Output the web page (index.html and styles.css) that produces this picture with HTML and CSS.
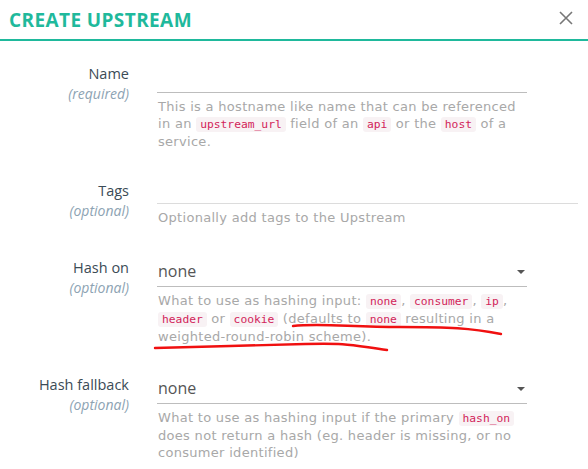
FILE: index.html
```html
<!DOCTYPE html>
<html>
<head>
<meta charset="utf-8">
<link rel="stylesheet" href="styles.css">
</head>
<body>
<header class="hdr">
  <h1 class="title">CREATE UPSTREAM</h1>
  <span class="close" aria-label="close">
    <svg width="14" height="14" viewBox="0 0 14 14"><path d="M1 1 L13 13 M13 1 L1 13" stroke="#777" stroke-width="1.6" fill="none"/></svg>
  </span>
</header>
<main class="form">
  <div class="row row-name">
    <div class="lbl"><div class="lname">Name</div><div class="lsub">(required)</div></div>
    <div class="field">
      <div class="input"></div>
      <p class="help">This is a hostname like name that can be referenced in an <code>upstream_url</code> field of an <code>api</code> or the <code>host</code> of a service.</p>
    </div>
  </div>
  <div class="row row-tags">
    <div class="lbl"><div class="lname">Tags</div><div class="lsub">(optional)</div></div>
    <div class="field">
      <div class="input input-tags"></div>
      <p class="help">Optionally add tags to the Upstream</p>
    </div>
  </div>
  <div class="row row-hash">
    <div class="lbl"><div class="lname">Hash on</div><div class="lsub">(optional)</div></div>
    <div class="field">
      <div class="input select"><span class="val">none</span><span class="caret"></span></div>
      <p class="help">What to use as hashing input: <code>none</code>, <code>consumer</code>, <code>ip</code>, <code>header</code> or <code>cookie</code> (defaults to <code>none</code> resulting in a weighted-round-robin scheme).</p>
    </div>
  </div>
  <div class="row row-fallback">
    <div class="lbl"><div class="lname">Hash fallback</div><div class="lsub">(optional)</div></div>
    <div class="field">
      <div class="input select"><span class="val">none</span><span class="caret"></span></div>
      <p class="help">What to use as hashing input if the primary <code>hash_on</code> does not return a hash (eg. header is missing, or no consumer identified)</p>
    </div>
  </div>
</main>
<svg class="scribble" width="588" height="469" viewBox="0 0 588 469">
  <path d="M293 326 C 320 323, 350 327, 400 327 S 470 328, 501 334" stroke="#f01010" stroke-width="2.4" fill="none" stroke-linecap="round"/>
  <path d="M155 348 C 200 347, 260 345, 305 344 S 350 345, 387 350" stroke="#f01010" stroke-width="2.4" fill="none" stroke-linecap="round"/>
</svg>
</body>
</html>
```
FILE: styles.css
```css
html, body {
  margin: 0;
  padding: 0;
  background: #fff;
}
body {
  width: 588px;
  height: 469px;
  overflow: hidden;
  position: relative;
  font-family: "Open Sans", "Liberation Sans", sans-serif;
}
.hdr {
  height: 39px;
  border-bottom: 2px solid #1fb99c;
  display: flex;
  align-items: center;
  justify-content: space-between;
  padding: 0 15px 0 9px;
}
.title {
  margin: 0;
  font-size: 19px;
  font-weight: 700;
  color: #1fb99c;
  letter-spacing: 0.4px;
}
.close {
  display: flex;
  margin-top: -4px;
}
.form {
  padding: 0 0 0 8px;
}
.row {
  display: grid;
  grid-template-columns: 121px 370px;
  column-gap: 28px;
}
.row-name { margin-top: 22px; }
.row-tags { margin-top: 24px; }
.row-tags .field { width: 421px; }
.row-tags .lbl { padding-top: 7px; }
.row-hash { margin-top: 31px; }
.row-fallback { margin-top: 29px; }
.lbl {
  text-align: right;
  padding-top: 1px;
}
.lname {
  font-size: 14.5px;
  line-height: 19px;
  color: #3b4b56;
}
.lsub {
  font-size: 14px;
  line-height: 22px;
  font-style: italic;
  color: #8da3b3;
}
.input {
  height: 29px;
  border-bottom: 1px solid #bdbdbd;
}
.input-tags {
  border-bottom-color: #dcdcdc;
}
.select {
  display: flex;
  align-items: center;
  justify-content: space-between;
  padding-right: 2px;
}
.val {
  font-size: 16px;
  color: #555;
  padding-left: 1px;
  margin-top: -2px;
}
.caret {
  width: 0;
  height: 0;
  border-left: 4px solid transparent;
  border-right: 4px solid transparent;
  border-top: 4px solid #555;
}
.help {
  margin: 5px 0 0 1px;
  font-family: "DejaVu Sans", sans-serif;
  font-size: 13px;
  line-height: 17px;
  color: #a8a8a8;
  letter-spacing: 0.3px;
}
code {
  font-family: "DejaVu Sans Mono", monospace;
  font-size: 11.3px;
  color: #d2245a;
  background: #f8f2f4;
  border-radius: 3px;
  padding: 1px 4px;
  letter-spacing: 0;
}
.scribble {
  position: absolute;
  left: 0;
  top: 0;
  pointer-events: none;
}
```
